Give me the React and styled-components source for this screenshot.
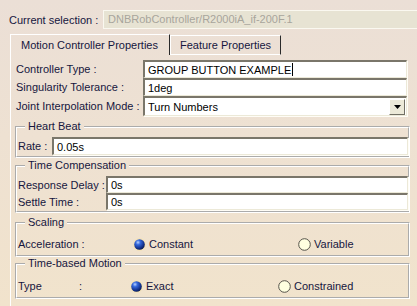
import React from "react";
import styled, { createGlobalStyle } from "styled-components";

const Global = createGlobalStyle`
  html, body { margin: 0; padding: 0; }
  body {
    width: 417px; height: 306px; overflow: hidden;
    font-family: "Liberation Sans", Tahoma, sans-serif;
    font-size: 11px;
  }
`;

const Page = styled.div`
  width: 417px;
  height: 306px;
  box-sizing: border-box;
  overflow: hidden;
  background: linear-gradient(180deg, #ebdfd6 0%, #eee1d2 45%, #f1e3cc 100%);
  color: #16163e;
  display: flex;
  flex-direction: column;
  padding-top: 10px;
`;

const SelectionRow = styled.div`
  display: flex;
  align-items: center;
  padding-left: 9px;
  height: 19px;
`;

const Label = styled.span`
  white-space: nowrap;
  color: #16163e;
`;

const SelectionLabel = styled(Label)`
  width: 94px;
`;

const ReadOnlyField = styled.div`
  flex: 1;
  height: 19px;
  box-sizing: border-box;
  margin-right: -10px;
  border: 1px solid #faf8f0;
  border-right: none;
  background: #e7e3d3;
  color: #a8a59c;
  padding-left: 4px;
  line-height: 17px;
  white-space: nowrap;
`;

const Tabs = styled.div`
  display: flex;
  align-items: flex-end;
  margin: 5px 0 0 10px;
  height: 21px;
`;

const Tab = styled.div`
  height: ${(p) => (p.$active ? 21 : 20)}px;
  box-sizing: border-box;
  padding: 0 ${(p) => (p.$active ? 11 : 9)}px 0 ${(p) => (p.$active ? 10 : 9)}px;
  border-top: 1px solid #ffffff;
  border-left: 1px solid #ffffff;
  border-right: 1px solid #2a2a2a;
  display: flex;
  align-items: center;
  white-space: nowrap;
  color: #16163e;
  ${(p) => !p.$active && "border-bottom: 1px solid #ffffff;"}
`;

const Panel = styled.div`
  margin-left: 10px;
  flex: 1;
  border-left: 1px solid #ffffff;
  padding: 5px 7px 0 4px;
  display: flex;
  flex-direction: column;
`;

const FormGrid = styled.div`
  display: grid;
  grid-template-columns: 128px 264px;
  align-items: center;
`;

const FieldLabel = styled(Label)`
  padding-left: 1px;
`;

const Input = styled.div`
  height: ${(p) => p.$h || 18}px;
  box-sizing: border-box;
  background: #ffffff;
  border-top: 2px solid #7a766a;
  border-left: 2px solid #7a766a;
  border-right: 1px solid #ece9d8;
  border-bottom: 1px solid #ece9d8;
  box-shadow: 1px 1px 0 #fffdf6;
  color: #000000;
  padding-left: 3px;
  display: flex;
  align-items: center;
  white-space: nowrap;
`;

const Caret = styled.span`
  display: inline-block;
  width: 1px;
  height: 13px;
  background: #000;
  margin-left: 1px;
`;

const Select = styled(Input)`
  justify-content: space-between;
  padding-right: 1px;
`;

const DropButton = styled.div`
  width: 16px;
  height: 16px;
  box-sizing: border-box;
  background: #ece9d8;
  border-top: 1px solid #ffffff;
  border-left: 1px solid #ffffff;
  border-right: 1px solid #716f64;
  border-bottom: 1px solid #716f64;
  display: flex;
  align-items: center;
  justify-content: center;
`;

const Group = styled.fieldset`
  margin: ${(p) => p.$mt}px 0 0 0;
  padding: ${(p) => p.$pt}px 0 ${(p) => p.$pb}px 1px;
  border: 2px groove #ffffff;
  min-width: 0;
`;

const Legend = styled.legend`
  margin-left: 7px;
  padding: 0 3px;
  color: #16163e;
  line-height: 13px;
`;

const FieldRow = styled.div`
  display: grid;
  grid-template-columns: ${(p) => p.$label}px 1fr;
  align-items: center;
`;

const RadioRow = styled.div`
  display: grid;
  grid-template-columns: ${(p) => p.$cols};
  align-items: center;
  height: 18px;
`;

const RadioOption = styled.span`
  display: inline-flex;
  align-items: center;
  gap: 3px;
  white-space: nowrap;
`;

const Radio = ({ checked }) =>
  checked ? (
    <svg width="13" height="13" viewBox="0 0 13 13">
      <defs>
        <radialGradient id="rg" cx="0.36" cy="0.3" r="0.75">
          <stop offset="0" stopColor="#b8d2ff" />
          <stop offset="0.3" stopColor="#3468dc" />
          <stop offset="0.75" stopColor="#12308a" />
          <stop offset="1" stopColor="#081848" />
        </radialGradient>
      </defs>
      <circle cx="6.5" cy="6.5" r="6.4" fill="#f3e2b8" />
      <circle cx="6.5" cy="6.5" r="5.3" fill="url(#rg)" />
    </svg>
  ) : (
    <svg width="13" height="13" viewBox="0 0 13 13">
      <circle cx="6.5" cy="6.5" r="5.8" fill="#ffffe0" stroke="#55534a" strokeWidth="1" />
    </svg>
  );

const Arrow = () => (
  <svg width="7" height="4" viewBox="0 0 7 4">
    <path d="M0 0 H7 L3.5 4 Z" fill="#000" />
  </svg>
);

export default function App() {
  return (
    <>
      <Global />
      <Page>
        <SelectionRow>
          <SelectionLabel>Current selection :</SelectionLabel>
          <ReadOnlyField>DNBRobController/R2000iA_if-200F.1</ReadOnlyField>
        </SelectionRow>
        <Tabs>
          <Tab $active>Motion Controller Properties</Tab>
          <Tab>Feature Properties</Tab>
        </Tabs>
        <Panel>
          <FormGrid>
            <FieldLabel>Controller Type :</FieldLabel>
            <Input>
              GROUP BUTTON EXAMPLE
              <Caret />
            </Input>
            <FieldLabel>Singularity Tolerance :</FieldLabel>
            <Input>1deg</Input>
            <FieldLabel>Joint Interpolation Mode :</FieldLabel>
            <Select $h={20}>
              Turn Numbers
              <DropButton>
                <Arrow />
              </DropButton>
            </Select>
          </FormGrid>

          <Group $mt={4} $pt={4} $pb={1}>
            <Legend>Heart Beat</Legend>
            <FieldRow $label={34}>
              <Label>Rate :</Label>
              <Input>0.05s</Input>
            </FieldRow>
          </Group>

          <Group $mt={1} $pt={4} $pb={1}>
            <Legend>Time Compensation</Legend>
            <FieldRow $label={88}>
              <Label>Response Delay :</Label>
              <Input $h={17}>0s</Input>
              <Label>Settle Time :</Label>
              <Input $h={17}>0s</Input>
            </FieldRow>
          </Group>

          <Group $mt={3} $pt={6} $pb={2}>
            <Legend>Scaling</Legend>
            <RadioRow $cols="115px 165px 1fr">
              <Label>Acceleration :</Label>
              <RadioOption>
                <Radio checked />
                Constant
              </RadioOption>
              <RadioOption>
                <Radio />
                Variable
              </RadioOption>
            </RadioRow>
          </Group>

          <Group $mt={0} $pt={7} $pb={2}>
            <Legend>Time-based Motion</Legend>
            <RadioRow $cols="61px 51px 148px 1fr">
              <Label>Type</Label>
              <Label>:</Label>
              <RadioOption>
                <Radio checked />
                Exact
              </RadioOption>
              <RadioOption>
                <Radio />
                Constrained
              </RadioOption>
            </RadioRow>
          </Group>
        </Panel>
      </Page>
    </>
  );
}
